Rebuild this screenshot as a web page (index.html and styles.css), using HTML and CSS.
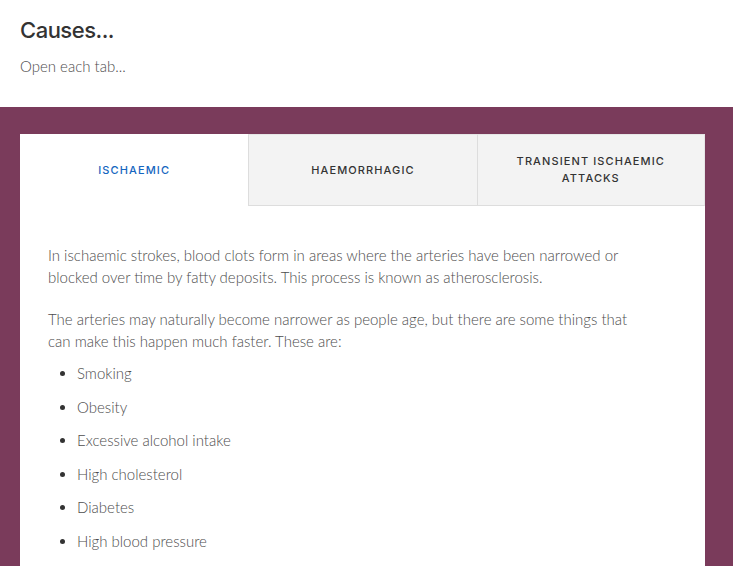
FILE: index.html
```html
<!DOCTYPE html>
<html lang="en">
<head>
    <meta charset="UTF-8">
    <meta name="viewport" content="width=device-width, initial-scale=1.0">
    <title>Causes</title>
    <link rel="stylesheet" href="styles.css">
</head>
<body>
    <div class="intro">
        <h2>Causes...</h2>
        <p>Open each tab...</p>
    </div>

    <div class="band">
        <div class="tabs-card">
            <div class="tab-row">
                <div class="tab active">ISCHAEMIC</div>
                <div class="tab">HAEMORRHAGIC</div>
                <div class="tab">TRANSIENT ISCHAEMIC ATTACKS</div>
            </div>

            <div class="tab-panel">
                <p>In ischaemic strokes, blood clots form in areas where the arteries have been narrowed or blocked over time by fatty deposits. This process is known as atherosclerosis.</p>
                <p>The arteries may naturally become narrower as people age, but there are some things that can make this happen much faster. These are:</p>
                <ul>
                    <li>Smoking</li>
                    <li>Obesity</li>
                    <li>Excessive alcohol intake</li>
                    <li>High cholesterol</li>
                    <li>Diabetes</li>
                    <li>High blood pressure</li>
                </ul>
            </div>
        </div>
    </div>
</body>
</html>
```

FILE: styles.css
```css
body {
    margin: 0;
    background-color: #fff;
    font-family: "Lato", "Open Sans", sans-serif;
    color: #4d4d4d;
    overflow: hidden;
}

.intro {
    padding: 16px 20px 30px;
}
.intro h2 {
    font-family: "Inter", "Roboto", sans-serif;
    font-weight: 500;
    font-size: 22px;
    letter-spacing: -0.5px;
    color: #333;
    margin: 0 0 11px;
    line-height: 28px;
}
.intro p {
    margin: 0;
    font-size: 15px;
    font-weight: 300;
    color: #4d4d4d;
    line-height: 22px;
}

.band {
    background-color: #7a3b5b;
    padding: 27px 28px 0 20px;
    min-height: 500px;
}

.tabs-card {
    background-color: #fff;
}

.tab-row {
    display: grid;
    grid-template-columns: 1fr 1fr 1fr;
    height: 72px;
}
.tab {
    display: flex;
    align-items: center;
    justify-content: center;
    text-align: center;
    padding: 0 20px;
    background-color: #f3f3f3;
    border-left: 1px solid #ddd;
    border-bottom: 1px solid #ddd;
    border-top: 1px solid #e6e6e6;
    font-family: "Inter", "Roboto", sans-serif;
    font-size: 11px;
    font-weight: 500;
    letter-spacing: 1.1px;
    line-height: 17px;
    color: #333;
}
.tab:last-child {
    border-right: 1px solid #e6e6e6;
}
.tab.active {
    background-color: #fff;
    border: none;
    color: #1566c0;
}

.tab-panel {
    padding: 38px 60px 20px 28px;
}
.tab-panel p {
    margin: 0 0 20px;
    font-size: 15px;
    font-weight: 300;
    line-height: 22px;
    color: #4d4d4d;
}
.tab-panel p:last-of-type {
    margin-bottom: 10px;
}
.tab-panel ul {
    margin: 0;
    padding-left: 29px;
}
.tab-panel li {
    font-size: 15px;
    font-weight: 300;
    line-height: 22px;
    margin-bottom: 11.6px;
}
.tab-panel li::marker {
    color: #333;
}
```
